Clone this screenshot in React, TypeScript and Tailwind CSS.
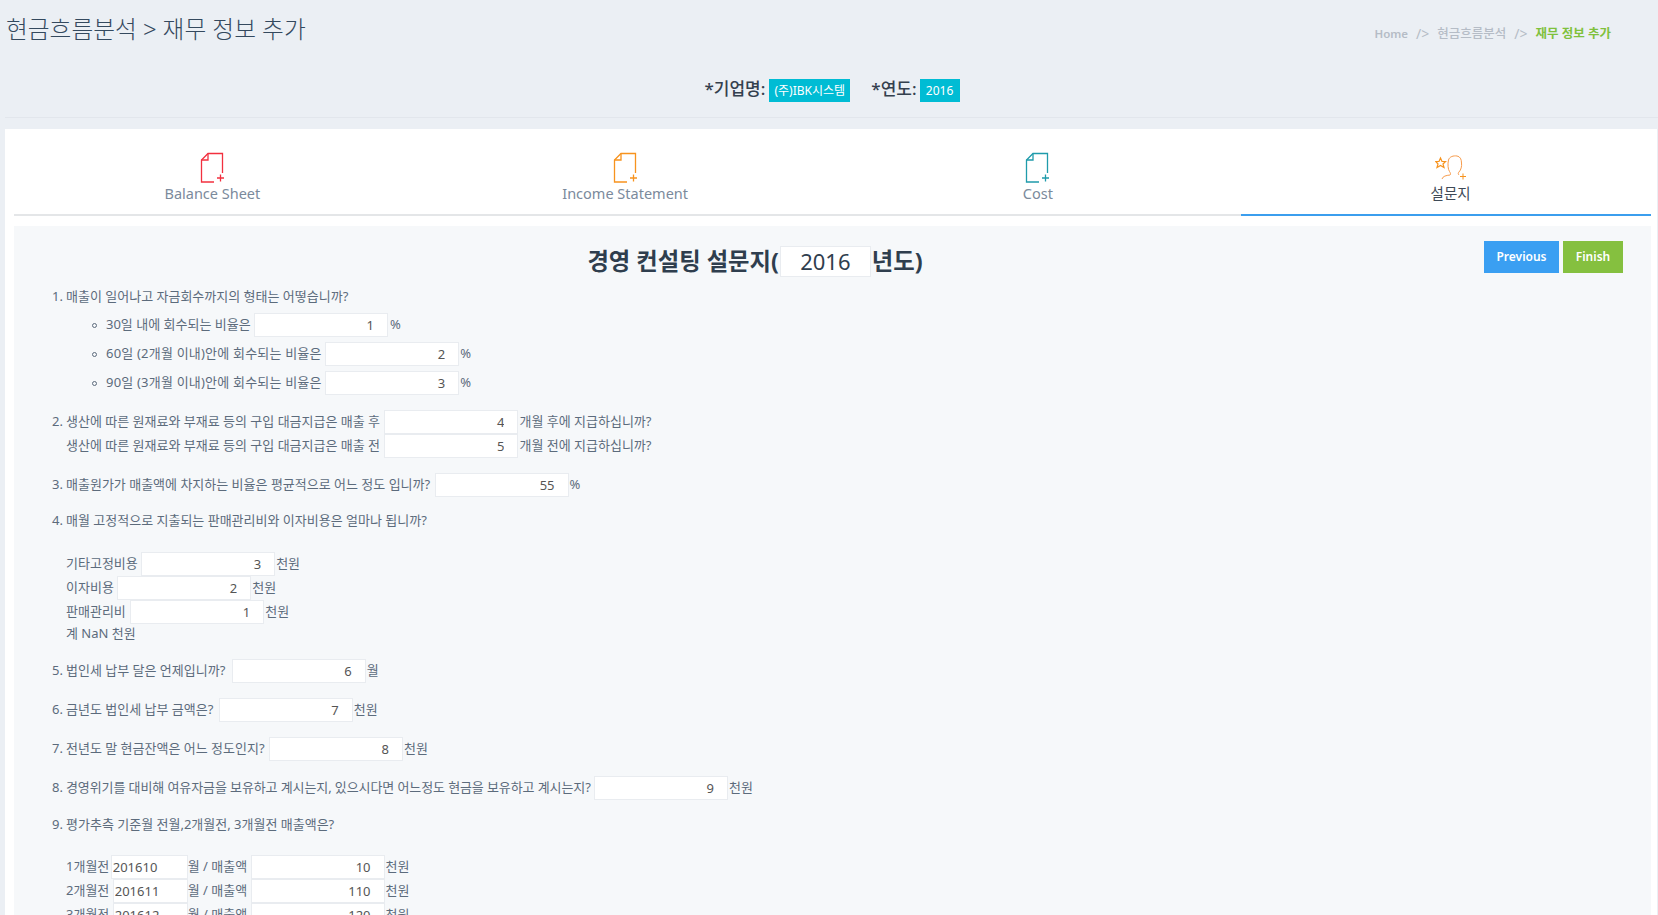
import React from "react";

const font = { fontFamily: '"Noto Sans", "Noto Sans CJK KR", sans-serif' };

function Num({ value, w = "w-[134px]" }: { value: string; w?: string }) {
  return (
    <input
      readOnly
      value={value}
      className={`${w} h-6 shrink-0 border border-[#e9ecf0] bg-white pr-[13px] text-right text-[13px] text-[#555] outline-none`}
    />
  );
}

function Row({ className = "", children }: { className?: string; children: React.ReactNode }) {
  return <div className={`flex h-6 items-center whitespace-pre pl-[38px] ${className}`}>{children}</div>;
}

function N({ children }: { children?: React.ReactNode }) {
  return <span className="w-[14px] shrink-0 pr-[3px] text-right">{children}</span>;
}

function DocIcon({ color }: { color: string }) {
  return (
    <svg width="25" height="31" viewBox="0 0 25 31" fill="none" stroke={color} strokeWidth="1.3">
      <path d="M14 30H1.5V8L8 1.5H22.5V21" />
      <path d="M1.5 8H8V1.5" />
      <path d="M17 26H24M20.5 22.5V29.5" />
    </svg>
  );
}

function PersonIcon() {
  return (
    <svg width="32" height="31" viewBox="0 0 32 31" fill="none" stroke="#f79b4b" strokeWidth="1">
      <path d="M5.5 6L7 9.5H10.5L8 12L9 15.5L5.5 13.5L2 15.5L3 12L0.8 9.5H4Z" stroke="#f7931e" strokeWidth="1.2" />
      <path d="M7 27C8 24 11 23.5 15 23C16 22.5 15.5 21 14.5 19.5C13 17.5 12.5 12 13.5 8C14.5 4.5 18.5 3.5 22 4C25 4.5 26.5 7 26.5 11C27 14 26 18 24 20C23 21 23 22 24 23" />
      <path d="M25 24.5H31M28 21.5V27.5" stroke="#f7931e" />
    </svg>
  );
}

const tabs = [
  { label: "Balance Sheet", icon: <DocIcon color="#f2303f" /> },
  { label: "Income Statement", icon: <DocIcon color="#f7931e" /> },
  { label: "Cost", icon: <DocIcon color="#1f9bab" /> },
  { label: "설문지", icon: <PersonIcon />, active: true },
];

export default function App() {
  return (
    <div style={font} className="h-[915px] w-[1658px] overflow-hidden bg-[#ebeff4] text-[13px] text-[#5c6b7c]">
      <div className="flex h-[58px] items-start justify-between pl-[6px] pr-[47px]">
        <h1 className="mt-[12px] text-[23.7px] font-light leading-[34px] text-[#34495e]">현금흐름분석 &gt; 재무 정보 추가</h1>
        <div className="mt-[24px] flex items-center gap-[8px] text-[12.5px] font-medium leading-5 text-[#b5bcc6]">
          <span className="text-[11.5px] font-semibold">Home</span>
          <span className="text-[14px] font-normal">/&gt;</span>
          <span>현금흐름분석</span>
          <span className="text-[14px] font-normal">/&gt;</span>
          <span className="font-semibold text-[#7fc13c]">재무 정보 추가</span>
        </div>
      </div>
      <div className="mt-[21px] flex h-[23px] items-center justify-center pl-[6px] text-[17px] font-medium text-[#34404e]">
        <span className="mb-[3px]">*기업명:</span>
        <span className="ml-[4px] flex h-[23px] w-[81px] items-center justify-center bg-[#00bcd4] text-[12px] font-normal text-white">(주)IBK시스템</span>
        <span className="mb-[3px] ml-[21px]">*연도:</span>
        <span className="ml-[3px] flex h-[23px] w-[40px] items-center justify-center bg-[#00bcd4] text-[12px] font-normal text-white">2016</span>
      </div>
      <div className="ml-[5px] mt-[15px] h-px bg-[#e2e6ec]" />
      <div className="ml-[5px] mr-px mt-[11px] bg-white pl-[9px] pr-[6px] pb-10">
        <div className="-ml-[8px] -mr-[6px] flex h-[85px]">
          {tabs.map((t) => (
            <div
              key={t.label}
              className={`flex flex-1 flex-col items-center pt-[23px] ${t.active ? "text-[#3e4a57]" : "text-[#7b8a9c]"}`}
            >
              {t.icon}
              <span className="text-[14.5px] leading-5">{t.label}</span>
            </div>
          ))}
        </div>
        <div className="flex h-[2px] justify-end bg-[#e4e6e8]">
          <div className="w-[410px] bg-[#3b9eee]" />
        </div>
        <div className="mt-[10px] bg-[#f6f8fa] pt-[15px]">
          <div className="flex h-[44px] items-start pr-[28px]">
            <div className="mt-[5px] flex h-[31px] flex-1 items-center justify-center pl-[12px] text-[23.3px] font-bold text-[#2f3e4e]">
              <span>경영 컨설팅 설문지(</span>
              <input readOnly value="2016" className="mx-px h-[31px] w-[91px] border border-[#e9ecf0] bg-white text-center text-[22px] font-normal text-[#2f3e4e] outline-none" />
              <span>년도)</span>
            </div>
            <div className="flex gap-[4px] text-[12px] font-semibold text-white">
              <span className="flex h-8 w-[75px] items-center justify-center bg-[#3a9ff2]">Previous</span>
              <span className="flex h-8 w-[60px] items-center justify-center bg-[#85c03f]">Finish</span>
            </div>
          </div>

          <Row><N>1.</N><span>매출이 일어나고 자금회수까지의 형태는 어떻습니까?</span></Row>
          <div className="mt-1 flex h-6 items-center whitespace-pre pl-[78px]">
            <span className="mr-[9px] h-[5px] w-[5px] rounded-full border border-[#5c6b7c]" /><span>30일 내에 회수되는 비율은 </span><Num value="1" /><span className="ml-[2px]">%</span>
          </div>
          <div className="mt-[5px] flex h-6 items-center whitespace-pre pl-[78px]">
            <span className="mr-[9px] h-[5px] w-[5px] rounded-full border border-[#5c6b7c]" /><span className="tracking-[0.2px]">60일 (2개월 이내)안에 회수되는 비율은 </span><Num value="2" /><span className="ml-[1px]">%</span>
          </div>
          <div className="mt-[5px] flex h-6 items-center whitespace-pre pl-[78px]">
            <span className="mr-[9px] h-[5px] w-[5px] rounded-full border border-[#5c6b7c]" /><span className="tracking-[0.2px]">90일 (3개월 이내)안에 회수되는 비율은 </span><Num value="3" /><span className="ml-[1px]">%</span>
          </div>

          <Row className="mt-[15px]"><N>2.</N><span className="mr-px">생산에 따른 원재료와 부재료 등의 구입 대금지급은 매출 후 </span><Num value="4" /><span className="ml-px">개월 후에 지급하십니까?</span></Row>
          <Row><N /><span className="mr-px">생산에 따른 원재료와 부재료 등의 구입 대금지급은 매출 전 </span><Num value="5" /><span className="ml-px">개월 전에 지급하십니까?</span></Row>

          <Row className="mt-[15px]"><N>3.</N><span className="mr-px">매출원가가 매출액에 차지하는 비율은 평균적으로 어느 정도 입니까? </span><Num value="55" /><span className="ml-[1px]">%</span></Row>

          <Row className="mt-3"><N>4.</N><span>매월 고정적으로 지출되는 판매관리비와 이자비용은 얼마나 됩니까?</span></Row>
          <Row className="mt-[19px]"><N /><span>기타고정비용 </span><Num value="3" /><span className="ml-[1px]">천원</span></Row>
          <Row><N /><span>이자비용 </span><Num value="2" /><span className="ml-[1px]">천원</span></Row>
          <Row><N /><span className="mr-px">판매관리비 </span><Num value="1" /><span className="ml-[1px]">천원</span></Row>
          <div className="flex h-5 items-center whitespace-pre pl-[38px]"><N /><span>계 NaN 천원</span></div>

          <Row className="mt-[15px]"><N>5.</N><span className="mr-[3px]">법인세 납부 달은 언제입니까? </span><Num value="6" /><span className="ml-px">월</span></Row>
          <Row className="mt-[15px]"><N>6.</N><span className="mr-[2px]">금년도 법인세 납부 금액은? </span><Num value="7" /><span className="ml-px">천원</span></Row>
          <Row className="mt-[15px]"><N>7.</N><span className="mr-px">전년도 말 현금잔액은 어느 정도인지? </span><Num value="8" /><span className="ml-px">천원</span></Row>
          <Row className="mt-[15px]"><N>8.</N><span className="tracking-[-0.1px]">경영위기를 대비해 여유자금을 보유하고 계시는지, 있으시다면 어느정도 현금을 보유하고 계시는지? </span><Num value="9" /><span className="ml-px">천원</span></Row>
          <Row className="mt-[13px]"><N>9.</N><span>평가추측 기준월 전월,2개월전, 3개월전 매출액은?</span></Row>

          {[["1개월전", "201610", "10"], ["2개월전", "201611", "110"], ["3개월전", "201612", "120"]].map(([a, b, c], i) => (
            <Row key={a} className={i === 0 ? "mt-[18px]" : ""}>
              <N /><span>{a} </span>
              <input readOnly value={b} className={`h-6 shrink-0 border border-[#e9ecf0] bg-white pl-px text-[13px] text-[#555] outline-none ${i === 0 ? "-ml-[2px] w-[77px]" : "w-[75px]"}`} />
              <span>월 / 매출액 </span>
              <Num value={c} />
              <span className="ml-[1px]">천원</span>
            </Row>
          ))}
        </div>
      </div>
    </div>
  );
}
